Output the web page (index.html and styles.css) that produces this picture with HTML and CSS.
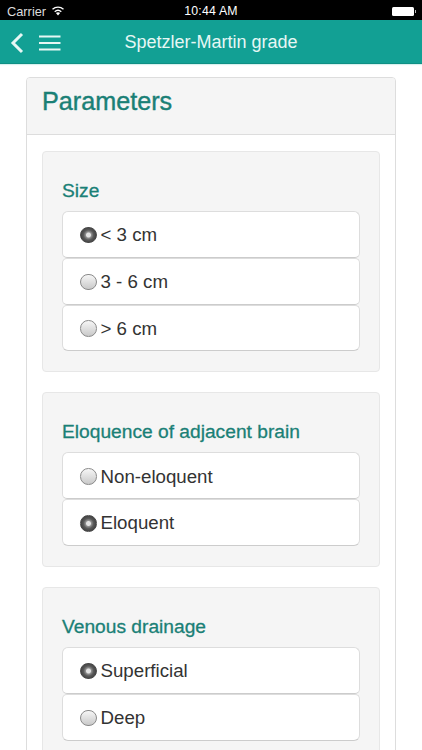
FILE: index.html
```html
<!DOCTYPE html>
<html lang="en">
<head>
<meta charset="utf-8">
<title>Spetzler-Martin grade</title>
<link rel="stylesheet" href="styles.css">
</head>
<body>
<div class="status">
  <div class="status-left">
    <span>Carrier</span>
    <svg class="wifi" width="14" height="10" viewBox="0 0 14 10"><path d="M7 9.6 4.9 7.1a3.2 3.2 0 0 1 4.2 0Z" fill="#fff"/><path d="M3.7 5.700a5 5 0 0 1 6.600 0M1.500 3.300a8.300 8.300 0 0 1 11 0" fill="none" stroke="#fff" stroke-width="1.300"/></svg>
  </div>
  <div class="status-time">10:44 AM</div>
  <div class="status-right"><span class="battery"></span><span class="battery-tip"></span></div>
</div>
<header class="nav">
  <svg class="back" width="14" height="22" viewBox="0 0 14 22"><path d="M12 2 3 11l9 9" fill="none" stroke="#e6f7f4" stroke-width="3"/></svg>
  <svg class="menu" width="22" height="16" viewBox="0 0 22 16"><path d="M0 1.500h21.500M0 8h21.500M0 14.500h21.500" stroke="#e6f7f4" stroke-width="2"/></svg>
  <h1 class="nav-title">Spetzler-Martin grade</h1>
</header>
<main class="page">
  <section class="panel">
    <h2 class="panel-heading">Parameters</h2>
    <div class="panel-body">
      <div class="well">
        <h3 class="label">Size</h3>
        <div class="list">
          <div class="item"><span class="radio on"></span>&lt; 3 cm</div>
          <div class="item"><span class="radio"></span>3 - 6 cm</div>
          <div class="item"><span class="radio"></span>&gt; 6 cm</div>
        </div>
      </div>
      <div class="well">
        <h3 class="label">Eloquence of adjacent brain</h3>
        <div class="list">
          <div class="item"><span class="radio"></span>Non-eloquent</div>
          <div class="item"><span class="radio on"></span>Eloquent</div>
        </div>
      </div>
      <div class="well">
        <h3 class="label">Venous drainage</h3>
        <div class="list">
          <div class="item"><span class="radio on"></span>Superficial</div>
          <div class="item"><span class="radio"></span>Deep</div>
        </div>
      </div>
    </div>
  </section>
</main>
</body>
</html>
```
FILE: styles.css
```css
* { box-sizing: border-box; }
html, body { margin: 0; padding: 0; height: 750px; overflow: hidden; background: #fff; }
body { font-family: "Liberation Sans", Arial, sans-serif; color: #333; }

.status { height: 20px; padding-top: 2px; background: #000; color: #fff; display: flex; align-items: center; font-size: 12.300px; position: relative; }
.status-left { display: flex; align-items: center; gap: 5px; padding-left: 7px; font-size: 12.800px; color: #ddd; }
.status-time { position: absolute; left: 0; right: 0; text-align: center; letter-spacing: .2px; }
.status-right { margin-left: auto; display: flex; align-items: center; padding-right: 6px; }
.battery { width: 22px; height: 9px; background: #fff; border-radius: 1.500px; }
.battery-tip { width: 1.500px; height: 3px; background: #bbb; margin-left: 1px; }

.nav { height: 44px; background: #12a094; border-bottom: 1px solid #0f8f84; box-shadow: 0 1px 1px #d8f0ee; display: flex; align-items: center; position: relative; padding: 2px 0 0 10px; }
.back { display: block; flex: none; }
.menu { display: block; flex: none; margin-left: 15px; }
.nav-title { position: absolute; left: 0; right: 0; margin: 0; text-align: center; font-size: 18px; font-weight: 400; color: #e6f7f4; }

.page { padding: 13px 26px 0; }
.panel { border: 1px solid #ddd; border-radius: 4px; }
.panel-heading { margin: 0; height: 57px; padding: 0 15px 9px; display: flex; align-items: center; background: #f5f5f5; border-bottom: 1px solid #ddd; border-radius: 3px 3px 0 0; color: #1a8076; font-size: 25.200px; font-weight: 400; -webkit-text-stroke: .4px #1a8076; }
.panel-body { padding: 16px 15px 0; display: flex; flex-direction: column; gap: 20px; }

.well { background: #f5f5f5; border: 1px solid #e7e7e7; border-radius: 4px; padding: 29px 19px 20px; }
.label { margin: 0 0 9px; height: 21px; line-height: 20px; font-size: 19.200px; font-weight: 400; color: #1a8076; -webkit-text-stroke: .3px #1a8076; }

.item { height: 46.800px; background: #fff; border: 1px solid #ddd; border-bottom-color: #ccc; display: flex; align-items: center; padding-left: 17px; padding-top: 1.500px; font-size: 18.700px; color: #333; }
.item:first-child { border-radius: 6px 6px 0 0; }
.item:last-child { border-radius: 0 0 6px 6px; }
.item + .item { border-top-left-radius: 5px; border-top-right-radius: 5px; }
.item:not(:last-child) { border-bottom-left-radius: 5px; border-bottom-right-radius: 5px; }

.radio { width: 16.500px; height: 16.500px; flex: none; border-radius: 50%; margin-right: 4px; border: 1px solid #8a8a8a; background: linear-gradient(#f6f6f6, #c9c9c9); }
.radio.on { border-color: #4a4a4a; background: radial-gradient(circle, #e2e2e2 0 2px, #8f8f8f 3px, #5a5a5a 5px, #3f3f3f 8px); }
```
